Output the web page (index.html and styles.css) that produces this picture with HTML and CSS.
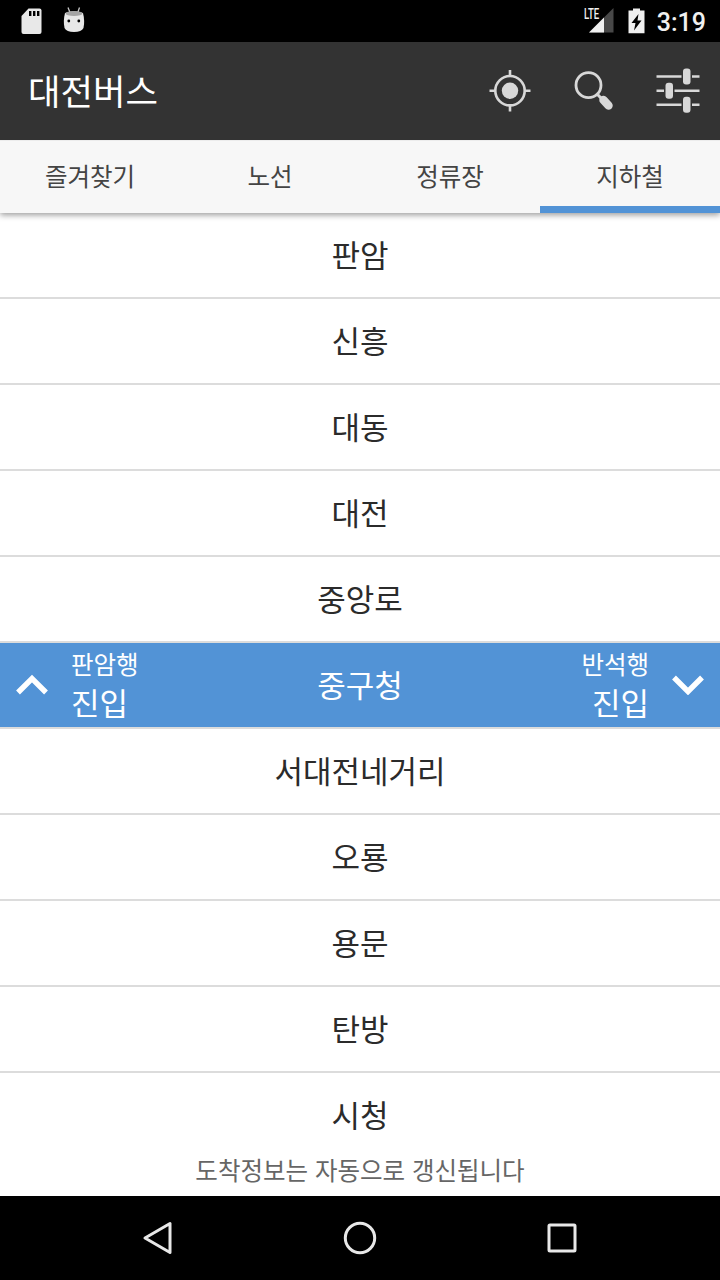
FILE: index.html
```html
<!DOCTYPE html>
<html lang="ko">
<head>
  <meta charset="UTF-8" />
  <meta name="viewport" content="width=device-width, initial-scale=1.0"/>
  <title>대전버스</title>
  <link rel="stylesheet" href="styles.css">
</head>
<body>
  <div class="status-bar">
    <svg class="icon-sd" width="22" height="27" viewBox="0 0 22 27">
      <path fill="#e8e8e8" d="M7.500 0.500h11a2 2 0 0 1 2 2V24a2 2 0 0 1-2 2H2.500a2 2 0 0 1-2-2V8z"/>
      <path fill="#000" d="M8 3h2.400v5H8zM12 3h2.400v5H12zM16 3h2.400v5H16z"/>
    </svg>
    <svg class="icon-droid" width="22" height="27" viewBox="0 0 22 27">
      <path stroke="#c8c8c8" stroke-width="1.300" d="M5 0.500l2 5M16.500 0.500l-1.700 5"/>
      <path fill="#e8e8e8" d="M2 6Q11 2.500 20 6Q22 14 20.500 21Q18.500 25 11 25Q3.500 25 1.500 21Q0 14 2 6z"/>
      <ellipse cx="11" cy="6.600" rx="8.500" ry="2.500" fill="#a5a5a5"/>
      <circle cx="5.800" cy="14" r="1.400"/>
      <circle cx="15.800" cy="14" r="1.400"/>
    </svg>
    <div class="signal">
      <svg width="25" height="25" viewBox="0 0 25 25">
        <path fill="#484848" d="M24.500 0v24.500H0z"/>
        <path fill="#f0f0f0" d="M15 9.500v15H0z"/>
      </svg>
      <span class="lte">LTE</span>
    </div>
    <svg class="icon-battery" width="17" height="26" viewBox="0 0 17 26">
      <path fill="#f0f0f0" d="M5 0.500h7v2h4.500v22.700H0.500V2.500H5z"/>
      <path fill="#000" d="M10.500 6L3.500 15h4l-1.500 7.500 7.500-10H9.500z"/>
    </svg>
    <span class="clock">3:19</span>
  </div>

  <div class="app-bar">
    <h1>대전버스</h1>
    <svg class="action" width="44" height="46" viewBox="0 0 44 46">
      <g fill="none" stroke="#d8d8d8" stroke-width="2.600">
        <circle cx="22" cy="22.700" r="14.700"/>
        <path d="M22 2v6M22 37.500v6M1.500 22.700h6M36.500 22.700h6"/>
      </g>
      <circle cx="22" cy="22.700" r="8.200" fill="#d8d8d8"/>
    </svg>
    <svg class="action" width="44" height="46" viewBox="0 0 44 46">
      <circle cx="16.500" cy="17.200" r="12.500" fill="none" stroke="#d8d8d8" stroke-width="2.800"/>
      <path stroke="#d8d8d8" stroke-width="3" d="M25 26l5 5"/>
      <path stroke="#d8d8d8" stroke-width="8.500" stroke-linecap="round" d="M31.500 32l5 5.500"/>
    </svg>
    <svg class="action" width="44" height="46" viewBox="0 0 44 46">
      <path stroke="#d8d8d8" stroke-width="2.600" d="M0.500 8.500h25M36 8.500h7.500M0.500 22.700h7.500M18.500 22.700h25M0.500 36.700h25M36 36.700h7.500"/>
      <g fill="#d8d8d8">
        <rect x="27" y="0.600" width="7.500" height="16" rx="3"/>
        <rect x="9.500" y="14.700" width="7.500" height="16" rx="3"/>
        <rect x="27" y="28.800" width="7.500" height="16" rx="3"/>
      </g>
    </svg>
  </div>

  <div class="tabs">
    <div class="tab">즐겨찾기</div>
    <div class="tab">노선</div>
    <div class="tab">정류장</div>
    <div class="tab active">지하철</div>
  </div>

  <div class="stations">
    <div class="station">판암</div>
    <div class="station">신흥</div>
    <div class="station">대동</div>
    <div class="station">대전</div>
    <div class="station">중앙로</div>
    <div class="station selected">
      <div class="arrival up">
        <svg width="32" height="22" viewBox="0 0 32 22">
          <path fill="none" stroke="#fff" stroke-width="5.400" d="M2 19.500L16 5.500l14 14"/>
        </svg>
        <div class="arrival-text">
          <div class="dest">판암행</div>
          <div class="state">진입</div>
        </div>
      </div>
      <div>중구청</div>
      <div class="arrival down">
        <div class="arrival-text">
          <div class="dest">반석행</div>
          <div class="state">진입</div>
        </div>
        <svg width="32" height="22" viewBox="0 0 32 22">
          <path fill="none" stroke="#fff" stroke-width="5.400" d="M2 4.500l14 14 14-14"/>
        </svg>
      </div>
    </div>
    <div class="station">서대전네거리</div>
    <div class="station">오룡</div>
    <div class="station">용문</div>
    <div class="station">탄방</div>
    <div class="station">시청</div>
  </div>
  <div class="notice">도착정보는 자동으로 갱신됩니다</div>

  <div class="nav-bar">
    <svg width="32" height="36" viewBox="0 0 32 36">
      <path fill="none" stroke="#e8e8e8" stroke-width="3" stroke-linejoin="round" d="M28 3.500v29L3 18z"/>
    </svg>
    <svg width="36" height="36" viewBox="0 0 36 36">
      <circle cx="18" cy="18" r="14.700" fill="none" stroke="#e8e8e8" stroke-width="3"/>
    </svg>
    <svg width="32" height="36" viewBox="0 0 32 36">
      <rect x="3" y="5" width="26" height="26" rx="1" fill="none" stroke="#e8e8e8" stroke-width="3"/>
    </svg>
  </div>
</body>
</html>
```

FILE: styles.css
```css
* { box-sizing: border-box; }
body { margin: 0; height: 1280px; display: flex; flex-direction: column; overflow: hidden;
  background: #fff; color: #2b2b2b; font-family: "Noto Sans CJK KR", sans-serif; }
svg { display: block; flex: none; }

.status-bar { height: 42px; flex: none; display: flex; align-items: flex-start; padding: 8px 14px 0 21px;
  background: #000; color: #f0f0f0; font-family: Roboto, sans-serif; }
.icon-droid { margin: -1px 0 0 20px; }
.signal { position: relative; margin-left: auto; }
.lte { position: absolute; left: -5px; top: 0; font-size: 15px; line-height: 13px; font-weight: 500;
  transform: scaleX(0.64); transform-origin: left; }
.icon-battery { margin-left: 14px; }
.clock { margin-left: 12px; font-size: 25px; line-height: 29px; font-weight: 500; }

.app-bar { height: 98px; flex: none; display: flex; align-items: center; padding: 0 20px 0 28px;
  background: #333; z-index: 1; }
.app-bar h1 { margin: 0 auto 2px 0; color: #fff; font-size: 35.3px; line-height: 50px; font-weight: 400; }
.action { margin-left: 40px; }

.tabs { height: 73px; flex: none; display: flex; position: relative; background: #f7f7f7;
  border-top: 1px solid #ececec; box-shadow: 0 2px 6px rgba(0,0,0,0.4); }
.tab { flex: 1; text-align: center; font-size: 24.5px; line-height: 70px; color: #444; }
.tab.active { border-bottom: 7px solid #5293d6; }

.stations { flex: 1; min-height: 0; overflow: hidden; }
.station { height: 86px; display: flex; justify-content: center; align-items: center; padding-bottom: 2px;
  border-bottom: 2px solid #dcdcdc; font-size: 31px; line-height: 40px; }
.selected { justify-content: space-between; padding: 0 16px 2px; background: #5293d6; color: #fff; }
.arrival { width: 160px; display: flex; align-items: center; gap: 23px; }
.arrival-text { margin-bottom: 2px; }
.down { justify-content: flex-end; }
.down .arrival-text { text-align: right; }
.dest { font-size: 24.5px; line-height: 38px; }
.state { font-size: 31px; line-height: 38px; }

.notice { height: 50px; flex: none; text-align: center; font-size: 24.5px; line-height: 48px;
  color: #666; background: #fff; }

.nav-bar { height: 84px; flex: none; display: flex; justify-content: space-between; align-items: center;
  padding: 0 142px; background: #000; }
```
